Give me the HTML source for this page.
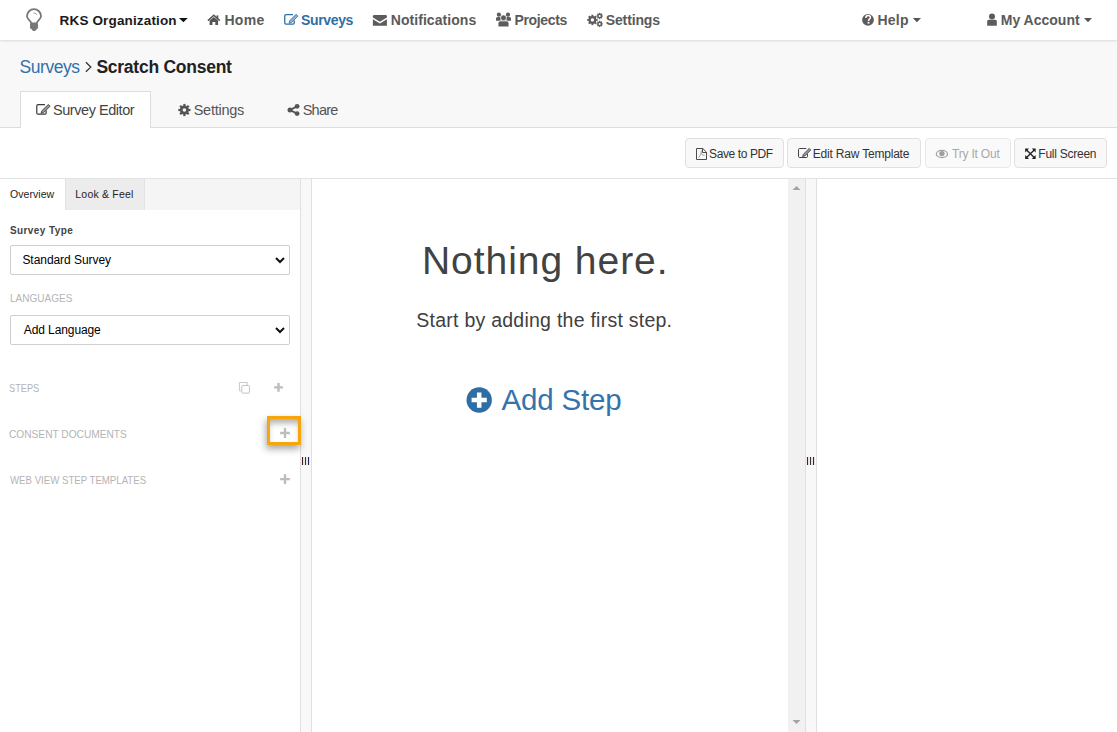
<!DOCTYPE html>
<html><head><meta charset="utf-8">
<style>
*{box-sizing:border-box;margin:0;padding:0}
html,body{width:1117px;height:732px;overflow:hidden;background:#fff;font-family:"Liberation Sans",sans-serif;color:#333;position:relative}
.b{position:absolute}
.t{position:absolute;white-space:nowrap;z-index:3}
.btn{border:1px solid #e0e0e0;border-radius:4px;background:#f8f8f8}
.btn.dis{border-color:#e8e8e8;background:#fafafa}
</style></head><body>
<div class="b" style="left:0;top:0;width:1117px;height:40px;background:#fff;z-index:2;box-shadow:0 1px 2px rgba(0,0,0,.12)"></div>
<div class="b" style="left:0;top:40px;width:1117px;height:87px;background:#f8f8f8"></div>
<div class="b" style="left:0;top:127px;width:1117px;height:1px;background:#ddd"></div>
<div class="b" style="left:20px;top:91px;width:131px;height:37px;background:#fff;border:1px solid #ddd;border-bottom:none"></div>
<div class="b" style="left:0;top:178px;width:1117px;height:1px;background:#e3e3e3"></div>
<div class="b btn" style="left:685px;top:138px;width:99px;height:30px"></div>
<div class="b btn" style="left:787px;top:138px;width:134px;height:30px"></div>
<div class="b btn dis" style="left:925px;top:138px;width:86px;height:30px"></div>
<div class="b btn" style="left:1014px;top:138px;width:93px;height:30px"></div>
<div class="b" style="left:0;top:179px;width:300px;height:31px;background:#f5f5f5"></div>
<div class="b" style="left:0;top:179px;width:65px;height:31px;background:#fff"></div>
<div class="b" style="left:65px;top:179px;width:80px;height:31px;background:#ececec;border-left:1px solid #e2e2e2;border-right:1px solid #e2e2e2"></div>
<div class="b" style="left:10px;top:245px;width:280px;height:30px;background:#fff;border:1px solid #cfcfcf;border-radius:2px"></div>
<svg class="b" style="left:275px;top:257px" width="10" height="7" viewBox="0 0 10 7"><path d="M1 1 L5 5 L9 1" fill="none" stroke="#111" stroke-width="2"/></svg>
<div class="b" style="left:10px;top:315px;width:280px;height:30px;background:#fff;border:1px solid #cfcfcf;border-radius:2px"></div>
<svg class="b" style="left:275px;top:327px" width="10" height="7" viewBox="0 0 10 7"><path d="M1 1 L5 5 L9 1" fill="none" stroke="#111" stroke-width="2"/></svg>
<div class="b" style="left:300px;top:179px;width:12px;height:553px;background:#f8f8f8;border-left:1px solid #e0e0e0;border-right:1px solid #e0e0e0"></div>
<div class="b" style="left:302px;top:457px;width:1px;height:8px;background:#4a1f1f;box-shadow:-0.5px 0 0 rgba(230,160,60,.35),0.5px 0 0 rgba(60,140,230,.35)"></div>
<div class="b" style="left:305px;top:457px;width:1px;height:8px;background:#4a2a2a;box-shadow:-0.5px 0 0 rgba(230,160,60,.35),0.5px 0 0 rgba(60,140,230,.35)"></div>
<div class="b" style="left:308px;top:457px;width:1px;height:8px;background:#1f2a55;box-shadow:-0.5px 0 0 rgba(230,160,60,.35),0.5px 0 0 rgba(60,140,230,.35)"></div>
<div class="b" style="left:805px;top:179px;width:12px;height:553px;background:#f8f8f8;border-left:1px solid #e0e0e0;border-right:1px solid #e0e0e0"></div>
<div class="b" style="left:807px;top:457px;width:1px;height:8px;background:#4a1f1f;box-shadow:-0.5px 0 0 rgba(230,160,60,.35),0.5px 0 0 rgba(60,140,230,.35)"></div>
<div class="b" style="left:810px;top:457px;width:1px;height:8px;background:#4a2a2a;box-shadow:-0.5px 0 0 rgba(230,160,60,.35),0.5px 0 0 rgba(60,140,230,.35)"></div>
<div class="b" style="left:813px;top:457px;width:1px;height:8px;background:#1f2a55;box-shadow:-0.5px 0 0 rgba(230,160,60,.35),0.5px 0 0 rgba(60,140,230,.35)"></div>
<div class="b" style="left:788px;top:179px;width:17px;height:553px;background:#f1f1f1"></div>
<svg class="b" style="left:792px;top:185px" width="9" height="6" viewBox="0 0 9 6"><path d="M0.5 5 L4.5 1 L8.5 5Z" fill="#a3a3a3"/></svg>
<svg class="b" style="left:792px;top:719px" width="9" height="6" viewBox="0 0 9 6"><path d="M0.5 1 L4.5 5 L8.5 1Z" fill="#a3a3a3"/></svg>
<div class="b" style="left:267px;top:416px;width:34px;height:29px;border:3px solid #f6a50a;box-shadow:-1px 4px 7px rgba(0,0,0,.35), inset 0 6px 6px -2px rgba(0,0,0,.32);z-index:3"></div>
<div class="t" style="left:59.6px;top:13.6px;font-size:13.5px;line-height:13.5px;font-weight:bold;letter-spacing:0.15px;color:#1a1a1a;">RKS Organization</div>
<div class="t" style="left:224.4px;top:12.9px;font-size:14.0px;line-height:14.0px;font-weight:bold;letter-spacing:0.3px;color:#5a5a5a;">Home</div>
<div class="t" style="left:301.0px;top:12.9px;font-size:14.0px;line-height:14.0px;font-weight:bold;letter-spacing:-0.35px;color:#2f6fa7;">Surveys</div>
<div class="t" style="left:390.8px;top:12.9px;font-size:14.0px;line-height:14.0px;font-weight:bold;letter-spacing:0.05px;color:#5a5a5a;">Notifications</div>
<div class="t" style="left:514.5px;top:12.9px;font-size:14.0px;line-height:14.0px;font-weight:bold;letter-spacing:-0.35px;color:#5a5a5a;">Projects</div>
<div class="t" style="left:605.8px;top:12.9px;font-size:14.0px;line-height:14.0px;font-weight:bold;letter-spacing:-0.15px;color:#5a5a5a;">Settings</div>
<div class="t" style="left:877.4px;top:12.9px;font-size:14.0px;line-height:14.0px;font-weight:bold;letter-spacing:0.25px;color:#5a5a5a;">Help</div>
<div class="t" style="left:1000.8px;top:12.9px;font-size:14.0px;line-height:14.0px;font-weight:bold;letter-spacing:0.0px;color:#5a5a5a;">My Account</div>
<div class="t" style="left:19.6px;top:58.9px;font-size:17.5px;line-height:17.5px;font-weight:normal;letter-spacing:-0.45px;color:#3270aa;">Surveys</div>
<div class="t" style="left:96.4px;top:58.9px;font-size:17.5px;line-height:17.5px;font-weight:bold;letter-spacing:-0.25px;color:#222;">Scratch Consent</div>
<div class="t" style="left:53.0px;top:103.3px;font-size:14.5px;line-height:14.5px;font-weight:normal;letter-spacing:-0.45px;color:#444;">Survey Editor</div>
<div class="t" style="left:193.7px;top:103.3px;font-size:14.5px;line-height:14.5px;font-weight:normal;letter-spacing:-0.25px;color:#555;">Settings</div>
<div class="t" style="left:302.7px;top:103.3px;font-size:14.5px;line-height:14.5px;font-weight:normal;letter-spacing:-0.75px;color:#555;">Share</div>
<div class="t" style="left:709.1px;top:147.8px;font-size:12.0px;line-height:12.0px;font-weight:normal;letter-spacing:-0.4px;color:#333;">Save to PDF</div>
<div class="t" style="left:812.8px;top:147.8px;font-size:12.0px;line-height:12.0px;font-weight:normal;letter-spacing:-0.2px;color:#333;">Edit Raw Template</div>
<div class="t" style="left:952.0px;top:147.8px;font-size:12.0px;line-height:12.0px;font-weight:normal;letter-spacing:-0.2px;color:#a8a8a8;">Try It Out</div>
<div class="t" style="left:1038.3px;top:147.8px;font-size:12.0px;line-height:12.0px;font-weight:normal;letter-spacing:-0.25px;color:#333;">Full Screen</div>
<div class="t" style="left:10.0px;top:189.2px;font-size:10.5px;line-height:10.5px;font-weight:normal;letter-spacing:0.05px;color:#222;">Overview</div>
<div class="t" style="left:75.3px;top:189.2px;font-size:10.5px;line-height:10.5px;font-weight:normal;letter-spacing:0.2px;color:#222;">Look &amp; Feel</div>
<div class="t" style="left:10.0px;top:226.2px;font-size:10.0px;line-height:10.0px;font-weight:bold;letter-spacing:0.4px;color:#444;">Survey Type</div>
<div class="t" style="left:22.4px;top:254.0px;font-size:12px;line-height:12px;font-weight:normal;letter-spacing:-0.05px;color:#000;">Standard Survey</div>
<div class="t" style="left:9.5px;top:293.3px;font-size:11.5px;line-height:11.5px;font-weight:normal;letter-spacing:0px;color:#b4b4b4;transform:scaleX(0.8714);transform-origin:0 0;">LANGUAGES</div>
<div class="t" style="left:23.8px;top:324.0px;font-size:12px;line-height:12px;font-weight:normal;letter-spacing:-0.1px;color:#000;">Add Language</div>
<div class="t" style="left:9.4px;top:383.1px;font-size:11.5px;line-height:11.5px;font-weight:normal;letter-spacing:0px;color:#b4b4b4;transform:scaleX(0.8);transform-origin:0 0;">STEPS</div>
<div class="t" style="left:9.3px;top:429.2px;font-size:11.0px;line-height:11.0px;font-weight:normal;letter-spacing:0px;color:#b4b4b4;transform:scaleX(0.9238);transform-origin:0 0;">CONSENT DOCUMENTS</div>
<div class="t" style="left:10.1px;top:474.6px;font-size:11.0px;line-height:11.0px;font-weight:normal;letter-spacing:0px;color:#b4b4b4;transform:scaleX(0.8768);transform-origin:0 0;">WEB VIEW STEP TEMPLATES</div>
<div class="t" style="left:422.0px;top:241.3px;font-size:39.0px;line-height:39.0px;font-weight:normal;letter-spacing:0.95px;color:#424242;">Nothing here.</div>
<div class="t" style="left:416.3px;top:311.0px;font-size:19.5px;line-height:19.5px;font-weight:normal;letter-spacing:0.25px;color:#404040;">Start by adding the first step.</div>
<div class="t" style="left:501.4px;top:384.8px;font-size:29.5px;line-height:29.5px;font-weight:normal;letter-spacing:-0.15px;color:#3473ab;">Add Step</div>
<svg style="position:absolute;left:0;top:0;z-index:4" width="1117" height="732"><path d="M31.2 23.2 C31 20.5 27 19.5 27 16.2 A7 7 0 0 1 41 16.2 C41 19.5 37 20.5 36.8 23.2" fill="none" stroke="#787878" stroke-width="1.8"/>
<rect x="30" y="22.6" width="8" height="6.4" rx="1.6" fill="#787878"/><rect x="31.9" y="27.5" width="4.5" height="3.6" rx="1.8" fill="#787878"/>
<path d="M33.6 12.9 Q35.6 13.1 36.8 14.7" fill="none" stroke="#8a8a8a" stroke-width="0.9"/>
<path d="M179 17.9 H187.8 L183.4 22.3Z" fill="#111"/>
<path d="M912.8 18 H921 L916.9 22.2Z" fill="#555"/>
<path d="M1084 18 H1092 L1088 22.2Z" fill="#555"/>
<path d="M207.9 20.6 L213.85 15.3 L219.8 20.6" fill="none" stroke="#555" stroke-width="1.5"/>
<path d="M209.6 20.4 L213.85 16.9 L218.1 20.4 V24.9 H215.3 V21.9 H212.4 V24.9 H209.6Z" fill="#555"/>
<rect x="216.6" y="15.4" width="1.7" height="3" fill="#555"/>
<path d="M293.05 14.55 H285.95 Q284.75 14.55 284.75 15.75 V22.85 Q284.75 24.05 285.95 24.05 H293.05 Q294.25 24.05 294.25 22.85 V20.44" fill="none" stroke="#2f6fa7" stroke-width="1.3"/><path d="M289.07 23.19 L291.54 22.54 L297.92 16.12 L296.08 14.28 L289.70 20.71Z" fill="#2f6fa7" fill-opacity="0.55" stroke="#2f6fa7" stroke-width="0.8" stroke-linejoin="round"/>
<path d="M372.9 16.2 Q372.9 15 374.1 15 H385.7 Q386.9 15 386.9 16.2 V17.6 L379.9 21.8 L372.9 17.6Z" fill="#5c5c5c"/>
<path d="M372.9 19.3 L379.9 23.4 L386.9 19.3 V25.8 H372.9Z" fill="#5c5c5c"/>
<circle cx="498.9" cy="14.7" r="2.1" fill="#5c5c5c"/><circle cx="508" cy="14.7" r="2.1" fill="#5c5c5c"/>
<path d="M496 20.8 V18.6 Q496 17 497.6 17 H500.5 V20.8Z M511 20.8 V18.6 Q511 17 509.4 17 H506.5 V20.8Z" fill="#5c5c5c"/>
<circle cx="503.5" cy="17.9" r="2.8" fill="#5c5c5c" stroke="#fff" stroke-width="0.5"/>
<path d="M498.2 26.8 V23.3 Q498.2 21.1 500.4 21.1 H506.6 Q508.8 21.1 508.8 23.3 V26.8Z" fill="#5c5c5c" stroke="#fff" stroke-width="0.5"/>
<circle cx="592.4" cy="19.9" r="3.9" fill="#5c5c5c"/><rect x="591.45" y="14.70" width="1.90" height="2.10" fill="#5c5c5c" transform="rotate(0.0 592.4 19.9)"/><rect x="591.45" y="14.70" width="1.90" height="2.10" fill="#5c5c5c" transform="rotate(45.0 592.4 19.9)"/><rect x="591.45" y="14.70" width="1.90" height="2.10" fill="#5c5c5c" transform="rotate(90.0 592.4 19.9)"/><rect x="591.45" y="14.70" width="1.90" height="2.10" fill="#5c5c5c" transform="rotate(135.0 592.4 19.9)"/><rect x="591.45" y="14.70" width="1.90" height="2.10" fill="#5c5c5c" transform="rotate(180.0 592.4 19.9)"/><rect x="591.45" y="14.70" width="1.90" height="2.10" fill="#5c5c5c" transform="rotate(225.0 592.4 19.9)"/><rect x="591.45" y="14.70" width="1.90" height="2.10" fill="#5c5c5c" transform="rotate(270.0 592.4 19.9)"/><rect x="591.45" y="14.70" width="1.90" height="2.10" fill="#5c5c5c" transform="rotate(315.0 592.4 19.9)"/><circle cx="592.4" cy="19.9" r="1.7" fill="#fff"/>
<circle cx="599.7" cy="16.0" r="2.4" fill="#5c5c5c"/><rect x="599.10" y="12.80" width="1.20" height="1.60" fill="#5c5c5c" transform="rotate(0.0 599.7 16.0)"/><rect x="599.10" y="12.80" width="1.20" height="1.60" fill="#5c5c5c" transform="rotate(45.0 599.7 16.0)"/><rect x="599.10" y="12.80" width="1.20" height="1.60" fill="#5c5c5c" transform="rotate(90.0 599.7 16.0)"/><rect x="599.10" y="12.80" width="1.20" height="1.60" fill="#5c5c5c" transform="rotate(135.0 599.7 16.0)"/><rect x="599.10" y="12.80" width="1.20" height="1.60" fill="#5c5c5c" transform="rotate(180.0 599.7 16.0)"/><rect x="599.10" y="12.80" width="1.20" height="1.60" fill="#5c5c5c" transform="rotate(225.0 599.7 16.0)"/><rect x="599.10" y="12.80" width="1.20" height="1.60" fill="#5c5c5c" transform="rotate(270.0 599.7 16.0)"/><rect x="599.10" y="12.80" width="1.20" height="1.60" fill="#5c5c5c" transform="rotate(315.0 599.7 16.0)"/><circle cx="599.7" cy="16.0" r="1.0" fill="#fff"/>
<circle cx="599.7" cy="23.9" r="2.4" fill="#5c5c5c"/><rect x="599.10" y="20.70" width="1.20" height="1.60" fill="#5c5c5c" transform="rotate(0.0 599.7 23.9)"/><rect x="599.10" y="20.70" width="1.20" height="1.60" fill="#5c5c5c" transform="rotate(45.0 599.7 23.9)"/><rect x="599.10" y="20.70" width="1.20" height="1.60" fill="#5c5c5c" transform="rotate(90.0 599.7 23.9)"/><rect x="599.10" y="20.70" width="1.20" height="1.60" fill="#5c5c5c" transform="rotate(135.0 599.7 23.9)"/><rect x="599.10" y="20.70" width="1.20" height="1.60" fill="#5c5c5c" transform="rotate(180.0 599.7 23.9)"/><rect x="599.10" y="20.70" width="1.20" height="1.60" fill="#5c5c5c" transform="rotate(225.0 599.7 23.9)"/><rect x="599.10" y="20.70" width="1.20" height="1.60" fill="#5c5c5c" transform="rotate(270.0 599.7 23.9)"/><rect x="599.10" y="20.70" width="1.20" height="1.60" fill="#5c5c5c" transform="rotate(315.0 599.7 23.9)"/><circle cx="599.7" cy="23.9" r="1.0" fill="#fff"/>
<circle cx="868" cy="19.8" r="5.9" fill="#5c5c5c"/>
<path d="M865.7 17.9 Q865.9 15.6 868.1 15.6 Q870.4 15.6 870.4 17.6 Q870.4 18.8 869 19.5 Q868.6 19.8 868.6 20.9" fill="none" stroke="#fff" stroke-width="1.5"/>
<rect x="867.6" y="21.8" width="1.8" height="1.8" fill="#fff"/>
<circle cx="992" cy="16.6" r="3.0" fill="#5c5c5c"/>
<path d="M987.2 25.8 V21.3 Q987.2 19.8 988.7 19.8 H995.3 Q996.8 19.8 996.8 21.3 V25.8Z" fill="#5c5c5c"/>
<path d="M85.9 62.3 L90.8 67.1 L85.9 71.8" fill="none" stroke="#333" stroke-width="1.3"/>
<path d="M44.95 104.70 H38.00 Q36.80 104.70 36.80 105.90 V112.95 Q36.80 114.15 38.00 114.15 H44.95 Q46.15 114.15 46.15 112.95 V110.56" fill="none" stroke="#3a3a3a" stroke-width="1.2"/><path d="M41.05 113.26 L43.50 112.63 L50.17 106.20 L48.43 104.40 L41.77 110.83Z" fill="#3a3a3a" fill-opacity="0.55" stroke="#3a3a3a" stroke-width="0.8" stroke-linejoin="round"/>
<circle cx="184.4" cy="110.0" r="4.5" fill="#555"/><rect x="183.30" y="103.90" width="2.20" height="2.40" fill="#555" transform="rotate(0.0 184.4 110.0)"/><rect x="183.30" y="103.90" width="2.20" height="2.40" fill="#555" transform="rotate(45.0 184.4 110.0)"/><rect x="183.30" y="103.90" width="2.20" height="2.40" fill="#555" transform="rotate(90.0 184.4 110.0)"/><rect x="183.30" y="103.90" width="2.20" height="2.40" fill="#555" transform="rotate(135.0 184.4 110.0)"/><rect x="183.30" y="103.90" width="2.20" height="2.40" fill="#555" transform="rotate(180.0 184.4 110.0)"/><rect x="183.30" y="103.90" width="2.20" height="2.40" fill="#555" transform="rotate(225.0 184.4 110.0)"/><rect x="183.30" y="103.90" width="2.20" height="2.40" fill="#555" transform="rotate(270.0 184.4 110.0)"/><rect x="183.30" y="103.90" width="2.20" height="2.40" fill="#555" transform="rotate(315.0 184.4 110.0)"/><circle cx="184.4" cy="110.0" r="1.8" fill="#f8f8f8"/>
<path d="M290 110 L297.1 106.3 M290 110 L297.1 113.6" stroke="#555" stroke-width="1.9"/>
<circle cx="297.1" cy="106.3" r="2.4" fill="#555"/><circle cx="297.1" cy="113.6" r="2.4" fill="#555"/><circle cx="290" cy="110" r="2.5" fill="#555"/>
<path d="M696.5 148.5 H702.8 L706.5 152.2 V159.5 H696.5Z" fill="none" stroke="#4a4a4a" stroke-width="1"/>
<path d="M702.5 148.5 V152.5 H706.5" fill="none" stroke="#4a4a4a" stroke-width="1"/>
<path d="M698.6 157.8 L700.6 154.6 Q701.5 152.6 701.3 150.6 M701.3 152.8 Q701.8 154.5 703 155.2 L704.6 155.3" fill="none" stroke="#8a8a8a" stroke-width="0.8"/>
<path d="M806.30 148.50 H799.70 Q798.50 148.50 798.50 149.70 V156.30 Q798.50 157.50 799.70 157.50 H806.30 Q807.50 157.50 807.50 156.30 V154.08" fill="none" stroke="#444" stroke-width="1.0"/><path d="M802.60 156.60 L804.97 155.86 L810.81 150.01 L809.19 148.39 L803.34 154.23Z" fill="#444" fill-opacity="0.55" stroke="#444" stroke-width="0.8" stroke-linejoin="round"/>
<ellipse cx="941.9" cy="154" rx="5.6" ry="3.6" fill="none" stroke="#a0a0a0" stroke-width="1.2"/>
<circle cx="941.9" cy="153.6" r="2.7" fill="#a0a0a0"/>
<path d="M1025.8 149.2 L1035 158.3 M1035 149.2 L1025.8 158.3" stroke="#222" stroke-width="1.3"/>
<path d="M1025.2 148.6 H1029.0 L1025.2 152.4Z" fill="#222"/>
<path d="M1035.6 148.6 H1031.8 L1035.6 152.4Z" fill="#222"/>
<path d="M1025.2 158.9 H1029.0 L1025.2 155.1Z" fill="#222"/>
<path d="M1035.6 158.9 H1031.8 L1035.6 155.1Z" fill="#222"/>
<path d="M241.3 390.8 H239.4 V382.5 H247.2 V385" fill="none" stroke="#c9c9c9" stroke-width="1"/>
<rect x="241.8" y="385.5" width="7.6" height="7.6" rx="0.8" fill="#fff" stroke="#c3c3c3" stroke-width="1"/>
<path d="M274.1 386.2 H282.9 V388.59999999999997 H274.1Z M277.3 383.0 H279.7 V391.79999999999995 H277.3Z" fill="#bdbdbd"/>
<path d="M280.1 431.8 H289.9 V434.2 H280.1Z M283.8 428.1 H286.2 V437.9 H283.8Z" fill="#bdbdbd"/>
<path d="M280.1 477.90000000000003 H289.9 V480.3 H280.1Z M283.8 474.20000000000005 H286.2 V484.0 H283.8Z" fill="#bdbdbd"/>
<circle cx="479.2" cy="400.0" r="12.7" fill="#2f6ea5"/>
<path d="M471.59999999999997 397.85 H486.8 V402.35 H471.59999999999997Z M476.95 392.5 H481.45 V407.70000000000005 H476.95Z" fill="#fff"/></svg>
</body></html>
